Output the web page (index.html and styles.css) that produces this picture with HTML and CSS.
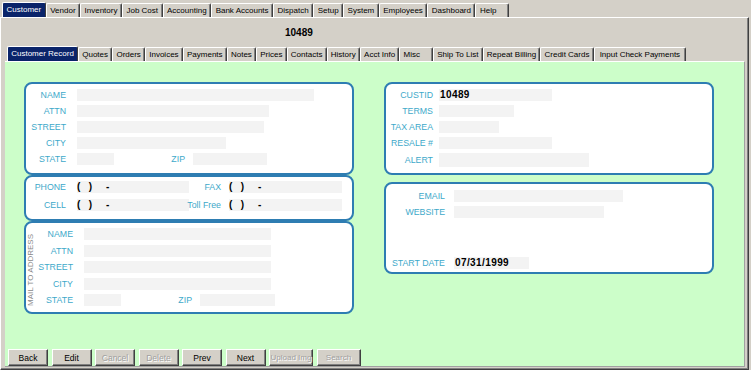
FILE: index.html
```html
<!DOCTYPE html>
<html lang="en">
  <head>
    <meta charset="UTF-8" />
    <title>Customer</title>
    <link rel="stylesheet" href="styles.css">
  </head>
  <body>
    <div class="tabs tabs-top">
      <div class="tab tab-active">Customer</div>
      <div class="tab">Vendor</div>
      <div class="tab">Inventory</div>
      <div class="tab">Job Cost</div>
      <div class="tab">Accounting</div>
      <div class="tab">Bank Accounts</div>
      <div class="tab">Dispatch</div>
      <div class="tab">Setup</div>
      <div class="tab">System</div>
      <div class="tab">Employees</div>
      <div class="tab">Dashboard</div>
      <div class="tab tab-wide">Help</div>
    </div>

    <div class="frame">
      <div class="frame-title">10489</div>

      <div class="tabs tabs-sub">
        <div class="tab tab-active">Customer Record</div>
        <div class="tab">Quotes</div>
        <div class="tab">Orders</div>
        <div class="tab">Invoices</div>
        <div class="tab">Payments</div>
        <div class="tab">Notes</div>
        <div class="tab">Prices</div>
        <div class="tab">Contacts</div>
        <div class="tab">History</div>
        <div class="tab">Acct Info</div>
        <div class="tab tab-wide">Misc</div>
        <div class="tab">Ship To List</div>
        <div class="tab">Repeat Billing</div>
        <div class="tab">Credit Cards</div>
        <div class="tab tab-last">Input Check Payments</div>
      </div>

      <div class="record">
        <div class="columns">
          <div class="col">
            <!-- address -->
            <div class="box box-address">
              <div class="row"><span class="lbl">NAME</span><span class="fld w237"></span></div>
              <div class="row"><span class="lbl">ATTN</span><span class="fld w192"></span></div>
              <div class="row"><span class="lbl">STREET</span><span class="fld w187"></span></div>
              <div class="row"><span class="lbl">CITY</span><span class="fld w149"></span></div>
              <div class="row">
                <span class="lbl">STATE</span><span class="fld w37"></span>
                <span class="lbl lbl-zip">ZIP</span><span class="fld w74"></span>
              </div>
            </div>

            <!-- phones -->
            <div class="box box-phone">
              <div class="row">
                <span class="lbl">PHONE</span><span class="fld w112 phone">(   )     -</span>
                <span class="lbl lbl-right">FAX</span><span class="fld w113 phone">(   )     -</span>
              </div>
              <div class="row">
                <span class="lbl">CELL</span><span class="fld w112 phone">(   )     -</span>
                <span class="lbl lbl-right">Toll Free</span><span class="fld w113 phone">(   )     -</span>
              </div>
            </div>

            <!-- mail to -->
            <div class="box box-mail">
              <div class="mail-side">MAIL TO ADDRESS</div>
              <div class="mail-rows">
                <div class="row"><span class="lbl">NAME</span><span class="fld w187"></span></div>
                <div class="row"><span class="lbl">ATTN</span><span class="fld w187"></span></div>
                <div class="row"><span class="lbl">STREET</span><span class="fld w187"></span></div>
                <div class="row"><span class="lbl">CITY</span><span class="fld w187"></span></div>
                <div class="row">
                  <span class="lbl">STATE</span><span class="fld w37"></span>
                  <span class="lbl lbl-zip">ZIP</span><span class="fld w75"></span>
                </div>
              </div>
            </div>
          </div>

          <div class="col">
            <div class="box box-info">
              <div class="row"><span class="lbl">CUSTID</span><span class="fld w113 value">10489</span></div>
              <div class="row"><span class="lbl">TERMS</span><span class="fld w75"></span></div>
              <div class="row"><span class="lbl">TAX AREA</span><span class="fld w60"></span></div>
              <div class="row"><span class="lbl">RESALE #</span><span class="fld w113"></span></div>
              <div class="row row-alert"><span class="lbl">ALERT</span><span class="fld w150"></span></div>
            </div>

            <div class="box box-web">
              <div class="row"><span class="lbl">EMAIL</span><span class="fld w169"></span></div>
              <div class="row"><span class="lbl">WEBSITE</span><span class="fld w150"></span></div>
              <div class="row row-start"><span class="lbl">START DATE</span><span class="fld w75 value">07/31/1999</span></div>
            </div>
          </div>
        </div>

        <div class="buttons">
          <button class="btn">Back</button>
          <button class="btn">Edit</button>
          <button class="btn" disabled>Cancel</button>
          <button class="btn" disabled>Delete</button>
          <button class="btn">Prev</button>
          <button class="btn">Next</button>
          <button class="btn btn-wide" disabled>Upload Img</button>
          <button class="btn btn-wide" disabled>Search</button>
        </div>
      </div>
    </div>
  </body>
</html>
```

FILE: styles.css
```css
* {
  margin: 0;
  padding: 0;
  box-sizing: border-box;
  font-family: "Liberation Sans", Arial, sans-serif;
}

body {
  width: 751px;
  height: 370px;
  overflow: hidden;
  background-color: #d4d0c8;
  color: #000;
}

/* tab strips */

.tabs {
  display: flex;
  align-items: flex-end;
}

.tabs-top {
  height: 17px;
  padding-left: 2px;
}

.tabs-sub {
  height: 15px;
  padding-left: 2px;
}

.tab {
  height: 14px;
  padding: 0 3.5px;
  font-size: 8px;
  line-height: 13px;
  white-space: nowrap;
  border-top: 1px solid #fff;
  border-left: 1px solid #fff;
  border-right: 1px solid #404040;
  border-radius: 2px 2px 0 0;
  box-shadow: inset -1px 0 #808080;
}

.tabs-sub .tab {
  padding: 0 3.2px;
}

.tabs-sub .tab-last {
  padding: 0 5px;
}

.tabs .tab-wide {
  padding-right: 12px;
}

.tab-active {
  height: 15px;
  background-color: #0a246a;
  color: #fff;
  box-shadow: none;
}

/* main frame */

.frame {
  height: 353px;
  width: 749px;
  padding: 0 3px 0 4px;
  border-top: 1px solid #fff;
  border-left: 1px solid #fff;
  border-right: 1px solid #404040;
  border-bottom: 1px solid #404040;
  box-shadow: inset -1px -1px #808080;
}

.frame-title {
  height: 28px;
  padding-left: 280px;
  padding-top: 9px;
  font-size: 10px;
  font-weight: bold;
}

.record {
  height: 306px;
  display: flex;
  flex-direction: column;
  background-color: #ccfec9;
  border-top: 1px solid #fff;
  border-right: 1px solid #a0a0a0;
  border-bottom: 1px solid #a0a0a0;
}

.columns {
  display: flex;
  gap: 30px;
  padding: 20px 0 0 19px;
}

.col {
  display: flex;
  flex-direction: column;
}

/* rounded boxes */

.box {
  width: 330px;
  background-color: #fff;
  border: 2px solid #2e7db2;
  border-radius: 8px;
  display: flex;
  flex-direction: column;
  gap: 4px;
}

.box-address {
  height: 93px;
  padding-top: 5px;
}

.box-phone {
  height: 46px;
  padding-top: 4px;
  gap: 6px;
}

.box-mail {
  height: 93px;
  flex-direction: row;
  gap: 0;
  padding-top: 5px;
}

.box-info {
  height: 93px;
  padding-top: 5px;
}

.box-web {
  height: 92px;
  margin-top: 7px;
  padding: 6px 0 3px;
}

.row {
  display: flex;
  align-items: center;
  height: 12px;
}

.row-alert {
  height: 14px;
}

.row-alert .fld {
  height: 14px;
}

.row-start {
  margin-top: auto;
}

.lbl {
  flex: none;
  width: 40px;
  margin-right: 11px;
  text-align: right;
  font-size: 8.8px;
  color: #3ea9ca;
  white-space: nowrap;
}

.lbl-right {
  width: 35px;
  margin-left: -3px;
  margin-right: 8px;
}

.box-info .lbl {
  width: 47px;
  margin-right: 6px;
}

.box-web .lbl {
  width: 59px;
  margin-right: 9px;
}

.mail-rows .lbl {
  width: 39px;
}

.row .lbl-zip,
.mail-rows .lbl-zip {
  width: 71px;
  margin-right: 8px;
}

.fld {
  flex: none;
  height: 12px;
  background-color: #f3f3f3;
}

.phone,
.value {
  font-size: 10px;
  font-weight: bold;
  line-height: 12px;
  white-space: pre;
}

.value {
  padding-left: 1px;
  letter-spacing: 0.4px;
}

.mail-side {
  width: 8px;
  align-self: center;
  writing-mode: vertical-rl;
  transform: rotate(180deg);
  font-size: 8px;
  color: #8a8a8a;
  white-space: nowrap;
}

.mail-rows {
  display: flex;
  flex-direction: column;
  gap: 4.5px;
}

.w37 { width: 37px; }
.w60 { width: 60px; }
.w74 { width: 74px; }
.w75 { width: 75px; }
.w112 { width: 112px; }
.w113 { width: 113px; }
.w149 { width: 149px; }
.w150 { width: 150px; }
.w169 { width: 169px; }
.w187 { width: 187px; }
.w192 { width: 192px; }
.w237 { width: 237px; }

/* bottom buttons */

.buttons {
  margin-top: auto;
  display: flex;
  gap: 3.5px;
  padding-left: 3px;
}

.btn {
  width: 40px;
  height: 17px;
  padding: 0;
  font-size: 8.5px;
  white-space: nowrap;
  background-color: #d4d0c8;
  color: #000;
  border-top: 1px solid #fff;
  border-left: 1px solid #fff;
  border-right: 1px solid #404040;
  border-bottom: 1px solid #404040;
  box-shadow: inset -1px -1px #808080;
}

.btn-wide {
  width: 44px;
  font-size: 8px;
}

.btn:disabled {
  color: #a0a0a0;
  text-shadow: 1px 1px #fff;
}
```
